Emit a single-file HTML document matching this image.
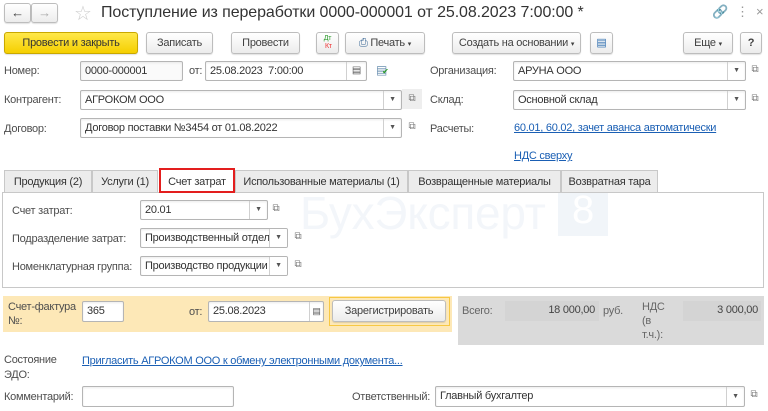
<!DOCTYPE html>
<html><head><meta charset="utf-8"><style>
*{box-sizing:border-box;margin:0;padding:0}
body{width:768px;height:411px;background:#fff;font-family:"Liberation Sans",Arial,sans-serif;font-size:11px;letter-spacing:-0.25px;color:#4d4d4d;position:relative;overflow:hidden}
.a{position:absolute;white-space:nowrap}
.btn{position:absolute;border:1px solid #bdbdbd;border-radius:3px;background:linear-gradient(#fff,#ececec);color:#404040;text-align:center;box-shadow:0 1px 1px rgba(0,0,0,.12)}
.f{position:absolute;border:1px solid #b5b5b5;border-radius:2px;background:#fff;color:#333;padding-left:4px;box-shadow:inset 0 1px 2px rgba(0,0,0,.08);white-space:nowrap}
.dd{position:absolute;top:0;bottom:0;width:18px;border-left:1px solid #d0d0d0;text-align:center;font-size:7px;color:#555}
.op{position:absolute;width:20px;text-align:center;font-size:10px;color:#777}
.lnk{color:#1a5fb4;text-decoration:underline}
.tab{position:absolute;top:170px;height:22px;border:1px solid #c8c8c8;border-bottom:none;background:#ececec;padding-top:5px;text-align:center;color:#333}
</style></head><body>
<div class="btn" style="left:4px;top:3px;width:27px;height:20px;line-height:17px;font-size:13px">&#8592;</div>
<div class="btn" style="left:31px;top:3px;width:27px;height:20px;line-height:17px;font-size:13px;color:#aaa">&#8594;</div>
<div class="a" style="left:74px;top:1px;font-size:20px;color:#ccc">&#9734;</div>
<div class="a" style="left:101px;top:4px;font-size:16px;letter-spacing:-0.1px;color:#333">Поступление из переработки 0000-000001 от 25.08.2023 7:00:00 *</div>
<div class="a" style="left:712px;top:4px;font-size:13px;color:#ccc">&#128279;</div>
<div class="a" style="left:736px;top:4px;font-size:13px;color:#999">&#8942;</div>
<div class="a" style="left:756px;top:4px;font-size:13px;color:#999">×</div>
<div class="btn" style="left:4px;top:32px;width:134px;height:22px;line-height:20px;background:linear-gradient(#ffe84a,#f5cf00);border-color:#c9a800;color:#333">Провести и закрыть</div>
<div class="btn" style="left:146px;top:32px;width:67px;height:22px;line-height:20px">Записать</div>
<div class="btn" style="left:231px;top:32px;width:69px;height:22px;line-height:20px">Провести</div>
<div class="btn" style="left:316px;top:32px;width:23px;height:22px;font-size:7px;line-height:8px;padding-top:2px"><span style="color:#2a9a2a">Дт</span><br><span style="color:#e33">&nbsp;Кт</span></div>
<div class="btn" style="left:345px;top:32px;width:80px;height:22px;line-height:20px"><span style="color:#2f5f8f">&#9113;</span> Печать <span style="font-size:7px">▾</span></div>
<div class="btn" style="left:452px;top:32px;width:129px;height:22px;line-height:20px">Создать на основании <span style="font-size:7px">▾</span></div>
<div class="btn" style="left:590px;top:32px;width:23px;height:22px;line-height:20px;color:#2f6fb0">&#9636;</div>
<div class="btn" style="left:683px;top:32px;width:50px;height:22px;line-height:20px">Еще <span style="font-size:7px">▾</span></div>
<div class="btn" style="left:740px;top:32px;width:22px;height:22px;line-height:20px;font-weight:bold">?</div>

<div class="a" style="left:4px;top:65px">Номер:</div>
<div class="f" style="left:80px;top:61px;width:103px;height:20px;line-height:18px;background:#fafafa">0000-000001</div>
<div class="a" style="left:189px;top:65px">от:</div>
<div class="f" style="left:205px;top:61px;width:162px;height:20px;line-height:18px">25.08.2023 &nbsp;7:00:00<div class="dd" style="right:0;width:20px;font-size:10px;line-height:18px">&#9636;</div></div>
<div class="a" style="left:376px;top:63px;color:#6a8fb0;font-size:12px">&#9636;<span style="color:#2a9a2a;font-size:8px;margin-left:-5px">✔</span></div>
<div class="a" style="left:430px;top:65px">Организация:</div>
<div class="f" style="left:513px;top:61px;width:233px;height:20px;line-height:18px">АРУНА ООО<div class="dd" style="right:0;line-height:18px">▼</div></div><div class="op" style="left:745px;top:64px">&#10697;</div>

<div class="a" style="left:4px;top:94px">Контрагент:</div>
<div class="f" style="left:80px;top:90px;width:322px;height:20px;line-height:18px">АГРОКОМ ООО<div class="dd" style="right:0;line-height:18px">▼</div></div><div class="op" style="left:402px;top:89px;height:20px;line-height:20px;background:#eee">&#10697;</div>
<div class="a" style="left:430px;top:94px">Склад:</div>
<div class="f" style="left:513px;top:90px;width:233px;height:20px;line-height:18px">Основной склад<div class="dd" style="right:0;line-height:18px">▼</div></div><div class="op" style="left:745px;top:93px">&#10697;</div>

<div class="a" style="left:4px;top:123px">Договор:</div>
<div class="f" style="left:80px;top:118px;width:322px;height:20px;line-height:18px">Договор поставки №3454 от 01.08.2022<div class="dd" style="right:0;line-height:18px">▼</div></div><div class="op" style="left:402px;top:121px">&#10697;</div>
<div class="a" style="left:430px;top:123px">Расчеты:</div>
<div class="a lnk" style="left:514px;top:122px">60.01, 60.02, зачет аванса автоматически</div>
<div class="a lnk" style="left:514px;top:150px">НДС сверху</div>

<div class="a" style="left:300px;top:186px;font-size:46px;color:#f3f6fa">БухЭксперт</div>
<div class="a" style="left:558px;top:188px;width:50px;height:48px;background:#f1f5f9;color:#fff;font-size:40px;text-align:center">8</div>

<div class="a" style="left:2px;top:192px;width:762px;height:96px;border:1px solid #c8c8c8"></div>
<div class="tab" style="left:4px;width:88px">Продукция (2)</div>
<div class="tab" style="left:92px;width:66px">Услуги (1)</div>
<div class="tab" style="left:235px;width:173px">Использованные материалы (1)</div>
<div class="tab" style="left:408px;width:153px">Возвращенные материалы</div>
<div class="tab" style="left:561px;width:97px">Возвратная тара</div>
<div class="tab" style="left:159px;width:76px;top:168px;height:25px;background:#fff;border:2px solid #e31e1e;padding-top:6px">Счет затрат</div>

<div class="a" style="left:12px;top:205px">Счет затрат:</div>
<div class="f" style="left:140px;top:200px;width:128px;height:20px;line-height:18px">20.01<div class="dd" style="right:0;line-height:18px">▼</div></div><div class="op" style="left:266px;top:203px">&#10697;</div>
<div class="a" style="left:12px;top:233px">Подразделение затрат:</div>
<div class="f" style="left:140px;top:228px;width:148px;height:20px;line-height:18px;overflow:hidden">Производственный отдел<div class="dd" style="right:0;line-height:18px;background:#fff">▼</div></div><div class="op" style="left:288px;top:231px">&#10697;</div>
<div class="a" style="left:12px;top:261px">Номенклатурная группа:</div>
<div class="f" style="left:140px;top:256px;width:148px;height:20px;line-height:18px;overflow:hidden">Производство продукции<div class="dd" style="right:0;line-height:18px;background:#fff">▼</div></div><div class="op" style="left:288px;top:259px">&#10697;</div>

<div class="a" style="left:3px;top:296px;width:449px;height:36px;background:#fde8b7"></div>
<div class="a" style="left:458px;top:296px;width:306px;height:49px;background:#dadada"></div>
<div class="a" style="left:8px;top:300px;line-height:14px;white-space:normal;width:72px">Счет-фактура №:</div>
<div class="f" style="left:82px;top:301px;width:42px;height:21px;line-height:19px">365</div>
<div class="a" style="left:189px;top:306px">от:</div>
<div class="f" style="left:208px;top:301px;width:116px;height:21px;line-height:19px">25.08.2023<div class="dd" style="right:0;width:14px;font-size:9px;line-height:19px">&#9636;</div></div>
<div class="a" style="left:329px;top:297px;width:121px;height:29px;border:1px solid #f7c843"></div>
<div class="btn" style="left:332px;top:300px;width:114px;height:22px;line-height:20px">Зарегистрировать</div>
<div class="a" style="left:462px;top:305px;color:#666">Всего:</div>
<div class="a" style="left:505px;top:301px;width:94px;height:20px;background:#d4d4d4;text-align:right;padding:3px 4px;color:#444">18 000,00</div>
<div class="a" style="left:603px;top:305px;color:#666">руб.</div>
<div class="a" style="left:642px;top:300px;line-height:14px;color:#666">НДС<br>(в<br>т.ч.):</div>
<div class="a" style="left:683px;top:301px;width:78px;height:20px;background:#d4d4d4;text-align:right;padding:3px 3px;color:#444">3 000,00</div>

<div class="a" style="left:4px;top:353px;line-height:15px">Состояние<br>ЭДО:</div>
<div class="a lnk" style="left:82px;top:355px">Пригласить АГРОКОМ ООО к обмену электронными документа...</div>
<div class="a" style="left:4px;top:391px">Комментарий:</div>
<div class="f" style="left:82px;top:386px;width:152px;height:21px"></div>
<div class="a" style="left:352px;top:391px">Ответственный:</div>
<div class="f" style="left:435px;top:386px;width:310px;height:21px;line-height:19px">Главный бухгалтер<div class="dd" style="right:0;line-height:19px">▼</div></div><div class="op" style="left:744px;top:389px">&#10697;</div>
</body></html>
